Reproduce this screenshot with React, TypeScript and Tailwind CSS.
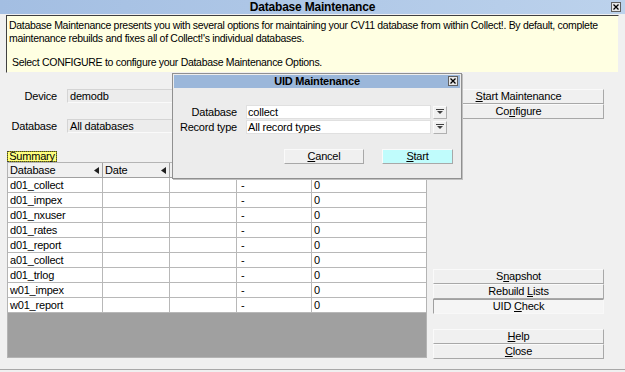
import React from "react";

const U = ({ c }: { c: string }) => <span className="underline">{c}</span>;

function Btn({ children, pressed, className = "" }: { children: React.ReactNode; pressed?: boolean; className?: string }) {
  return (
    <div
      className={
        "flex h-[15px] items-center justify-center border leading-none " +
        (pressed
          ? "bg-[#f5f5f5] border-t-[#a0a0a0] border-l-[#a0a0a0] border-r-[#f8f8f8] border-b-[#f8f8f8] "
          : "bg-[#f0f0f0] border-t-[#fafafa] border-l-[#fafafa] border-r-[#a8a8a8] border-b-[#a8a8a8] ") +
        className
      }
    >
      {children}
    </div>
  );
}

function CloseBox() {
  return (
    <div className="flex h-[10px] w-[10px] items-center justify-center border border-[#606060] bg-[#e8e8e8]">
      <svg width="6" height="6" viewBox="0 0 6 6">
        <path d="M0.5 0.5 L5.5 5.5 M5.5 0.5 L0.5 5.5" stroke="#000" strokeWidth="1.3" />
      </svg>
    </div>
  );
}

function DropBtn() {
  return (
    <div className="flex h-[13px] w-[14px] items-center justify-center border border-t-[#fafafa] border-l-[#fafafa] border-r-[#b0b0b0] border-b-[#b0b0b0] bg-[#f0f0f0]">
      <svg width="8" height="6" viewBox="0 0 8 6">
        <path d="M0 0.5 H8" stroke="#404040" strokeWidth="1" />
        <path d="M1 2 H7 L4 5 Z" fill="#404040" />
      </svg>
    </div>
  );
}

function SortTri() {
  return (
    <svg width="5" height="7" viewBox="0 0 5 7" className="shrink-0">
      <path d="M5 0 V7 L0 3.5 Z" fill="#202020" />
    </svg>
  );
}

const rows = [
  "d01_collect",
  "d01_impex",
  "d01_nxuser",
  "d01_rates",
  "d01_report",
  "a01_collect",
  "d01_trlog",
  "w01_impex",
  "w01_report",
];

export default function App() {
  return (
    <div className="relative h-[372px] w-[625px] overflow-hidden bg-[#f0f0f0] font-['Liberation_Sans',Arial,sans-serif] text-[11px] tracking-[-0.2px] text-black">
      {/* Title bar */}
      <div className="relative flex h-[14px] items-center justify-center bg-gradient-to-r from-[#a3bee2] to-[#bcd2ec]">
        <span className="text-[12px] font-bold leading-none tracking-[-0.2px]">Database Maintenance</span>
        <div className="absolute right-[4px] top-[2px]">
          <CloseBox />
        </div>
      </div>

      {/* Info box */}
      <div className="mx-[6px] mt-[1px] h-[58px] whitespace-nowrap border border-t-[#404040] border-l-[#404040] border-r-[#f0f0f0] border-b-[#f0f0f0] bg-[#ffffe2] px-[2px] pt-[3px] text-[10.5px] leading-[13px] tracking-[-0.3px]">
        <div>
          Database Maintenance presents you with several options for maintaining your CV11 database from within Collect!. By default, complete
        </div>
        <div>maintenance rebuilds and fixes all of Collect!'s individual databases.</div>
        <div className="mt-[11px] pl-[3px]">Select CONFIGURE to configure your Database Maintenance Options.</div>
      </div>

      {/* Body */}
      <div className="mt-[16px] flex pl-[7px]">
        {/* Left column */}
        <div className="w-[420px]">
          <div className="flex h-[14px] items-center">
            <div className="w-[50px] text-right">Device</div>
            <div className="ml-[10px] flex h-[14px] w-[270px] items-center border border-t-[#d4d4d4] border-l-[#d4d4d4] border-r-[#fafafa] border-b-[#fafafa] bg-[#ececec] pl-[2px]">
              demodb
            </div>
          </div>
          <div className="mt-[16px] flex h-[14px] items-center">
            <div className="w-[50px] text-right">Database</div>
            <div className="ml-[10px] flex h-[14px] w-[270px] items-center border border-t-[#d4d4d4] border-l-[#d4d4d4] border-r-[#fafafa] border-b-[#fafafa] bg-[#ececec] pl-[2px]">
              All databases
            </div>
          </div>

          {/* Tab */}
          <div className="mt-[18px] flex h-[11px] w-[50px] items-center justify-center border border-[#a0a000] bg-[#ffff80] leading-none">
            <span className="border border-dotted border-[#404040] px-[1px] leading-[9px]">Summary</span>
          </div>

          {/* Grid */}
          <div className="w-[420px] border border-[#b4b4b4] bg-[#a0a0a0]">
            <div className="flex h-[15px] bg-[#f0f0f0]">
              <div className="flex w-[95px] items-center justify-between border-r border-b border-r-[#a0a0a0] border-b-[#a0a0a0] pl-[2px] pr-[3px]">
                <span>Database</span>
                <SortTri />
              </div>
              <div className="flex w-[67px] items-center justify-between border-r border-b border-r-[#a0a0a0] border-b-[#a0a0a0] pl-[2px] pr-[3px]">
                <span>Date</span>
                <SortTri />
              </div>
              <div className="flex-1 border-b border-b-[#a0a0a0]" />
            </div>
            {rows.map((r) => (
              <div key={r} className="flex h-[15px] bg-white">
                <div className="flex w-[95px] items-center border-r border-b border-[#b8b8b8] pl-[2px]">{r}</div>
                <div className="w-[67px] border-r border-b border-[#b8b8b8]" />
                <div className="w-[67px] border-r border-b border-[#b8b8b8]" />
                <div className="flex w-[75px] items-center border-r border-b border-[#b8b8b8] pl-[4px]">-</div>
                <div className="flex flex-1 items-center border-b border-[#b8b8b8] pl-[2px]">0</div>
              </div>
            ))}
            <div className="h-[44px] bg-[#a0a0a0]" />
          </div>
        </div>

        {/* Right column */}
        <div className="ml-[6px] w-[171px]">
          <Btn>
            <span>
              <U c="S" />
              tart Maintenance
            </span>
          </Btn>
          <Btn>
            <span>
              Co<U c="n" />figure
            </span>
          </Btn>
          <div className="mt-[150px]">
            <Btn>
              <span>
                S<U c="n" />apshot
              </span>
            </Btn>
            <Btn>
              <span>
                Rebuild <U c="L" />ists
              </span>
            </Btn>
            <Btn pressed>
              <span>
                UID <U c="C" />heck
              </span>
            </Btn>
          </div>
          <div className="mt-[15px]">
            <Btn>
              <span>
                <U c="H" />elp
              </span>
            </Btn>
            <Btn>
              <span>
                <U c="C" />lose
              </span>
            </Btn>
          </div>
        </div>
      </div>

      {/* Dialog */}
      <div className="absolute left-[172px] top-[73px] h-[106px] w-[290px] border border-[#909090] bg-[#ececec] p-px shadow-[1px_1px_0_#c0c0c0]">
        <div className="relative flex h-[13px] items-center justify-center bg-[#9bb7da]">
          <span className="text-[11px] font-bold leading-none">UID Maintenance</span>
          <div className="absolute right-[2px] top-[1px]">
            <CloseBox />
          </div>
        </div>
        <div className="mt-[17px] flex flex-col gap-[1px]">
          <div className="flex h-[14px] items-center">
            <div className="w-[63px] text-right">Database</div>
            <div className="ml-[9px] flex h-[14px] w-[185px] items-center border border-[#e0e0e0] bg-white pl-[1px]">collect</div>
            <div className="ml-[2px]">
              <DropBtn />
            </div>
          </div>
          <div className="flex h-[14px] items-center">
            <div className="w-[63px] text-right">Record type</div>
            <div className="ml-[9px] flex h-[14px] w-[185px] items-center border border-[#e0e0e0] bg-white pl-[1px]">All record types</div>
            <div className="ml-[2px]">
              <DropBtn />
            </div>
          </div>
        </div>
        <div className="mt-[15px] flex pl-[110px]">
          <Btn className="w-[80px]">
            <span>
              <U c="C" />ancel
            </span>
          </Btn>
          <Btn className="ml-[18px] w-[71px] !bg-[#c0fcfc] border-[#b0b0b0]">
            <span>
              <U c="S" />tart
            </span>
          </Btn>
        </div>
      </div>

      {/* Bottom border */}
      <div className="absolute bottom-[2px] left-0 h-px w-full bg-[#a8a8a8]" />
    </div>
  );
}
